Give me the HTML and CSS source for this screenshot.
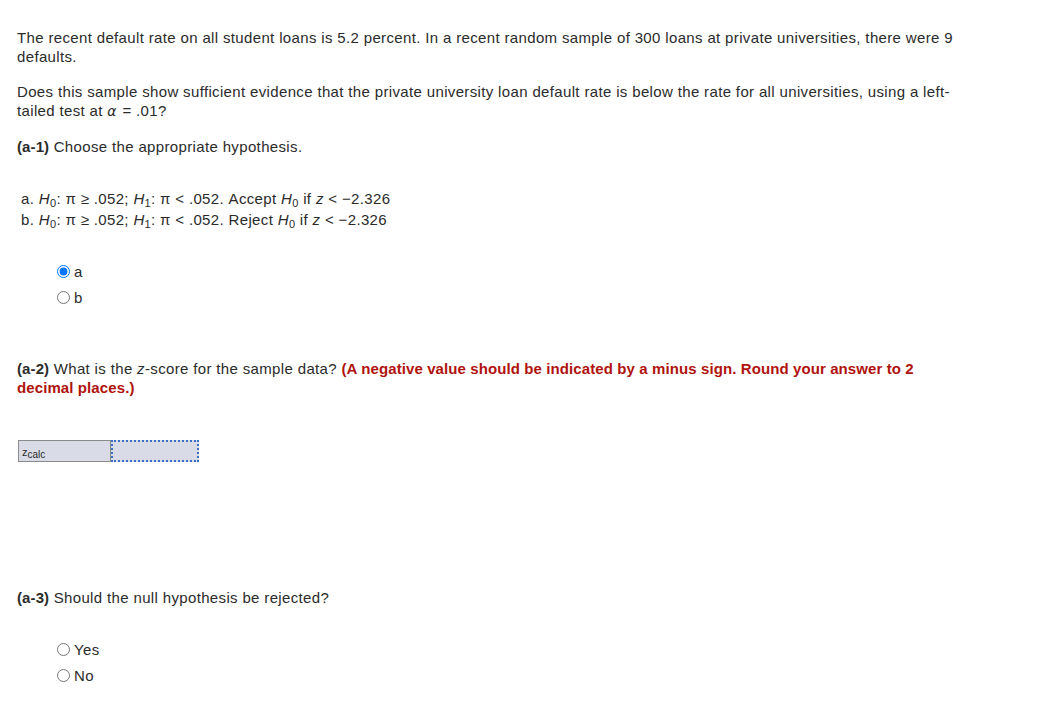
FILE: index.html
```html
<!DOCTYPE html>
<html lang="en">
<head>
  <meta charset="UTF-8" />
  <title>Hypothesis Test</title>
  <link rel="stylesheet" href="styles.css">
</head>
<body>
  <div class="question">
    <p>The recent default rate on all student loans is 5.2 percent. In a recent random sample of 300 loans at private universities, there were 9 defaults.</p>
    <p>Does this sample show sufficient evidence that the private university loan default rate is below the rate for all universities, using a left-tailed test at <i class="greek">α</i> = .01?</p>
    <p><b>(a-1)</b> Choose the appropriate hypothesis.</p>

    <div class="choices">
      <div>a. <i>H</i><sub>0</sub>: π ≥ .052; <i>H</i><sub>1</sub>: π &lt; .052. Accept <i>H</i><sub>0</sub> if <i>z</i> &lt; −2.326</div>
      <div>b. <i>H</i><sub>0</sub>: π ≥ .052; <i>H</i><sub>1</sub>: π &lt; .052. Reject <i>H</i><sub>0</sub> if <i>z</i> &lt; −2.326</div>
    </div>

    <div class="radios">
      <label><input type="radio" name="a1" checked> a</label>
      <label><input type="radio" name="a1"> b</label>
    </div>

    <p class="part-two"><b>(a-2)</b> What is the <i>z</i>-score for the sample data? <b class="hint">(A negative value should be indicated by a minus sign. Round your answer to 2 decimal places.)</b></p>

    <div class="answer-row">
      <div class="answer-label"><i>z</i><sub>calc</sub></div>
      <div class="answer-input"></div>
    </div>

    <p class="part-three"><b>(a-3)</b> Should the null hypothesis be rejected?</p>

    <div class="radios radios-last">
      <label><input type="radio" name="a3"> Yes</label>
      <label><input type="radio" name="a3"> No</label>
    </div>
  </div>
</body>
</html>
```

FILE: styles.css
```css
body {
  font-family: "Liberation Sans", Arial, sans-serif;
  margin: 0;
  padding: 0;
  background-color: #fff;
  color: #2b2b2b;
}

.question {
  width: 945px;
  padding: 28px 17px 20px;
  font-size: 15px;
  line-height: 19px;
  letter-spacing: 0.35px;
}

p {
  margin: 0 0 16px;
}

b {
  font-weight: bold;
  letter-spacing: 0.1px;
}

.greek {
  font-family: "DejaVu Sans", sans-serif;
  font-size: 14px;
  padding-right: 1px;
}

sub {
  font-size: 11px;
  line-height: 0;
  vertical-align: -3px;
}

.choices {
  margin: 32px 0 0 4px;
  line-height: 21px;
}

.radios {
  display: flex;
  flex-direction: column;
  gap: 7px;
  margin: 32px 0 0 40px;
}

.radios-last {
  margin-top: 33px;
}

.radios label {
  display: flex;
  align-items: center;
  gap: 4px;
  height: 19px;
}

.radios input {
  margin: 0;
  width: 13px;
  height: 13px;
}

.part-two {
  margin-top: 52px;
}

.hint {
  color: #b0120d;
}

.answer-row {
  display: flex;
  margin: 43px 0 0 1px;
  width: 181px;
  height: 22px;
}

.answer-label {
  width: 88px;
  background-color: #d9dce6;
  border: 1px solid #8a8a8a;
  font-size: 11px;
  letter-spacing: 0;
  padding-left: 3px;
  line-height: 22px;
}

.answer-label i {
  font-style: normal;
}

.answer-label sub {
  font-size: 10px;
  vertical-align: -2px;
}

.answer-input {
  flex: 1;
  background-color: #d9dce6;
  border: 2px dotted #3c6fc4;
}

.part-three {
  margin-top: 126px;
}
```
